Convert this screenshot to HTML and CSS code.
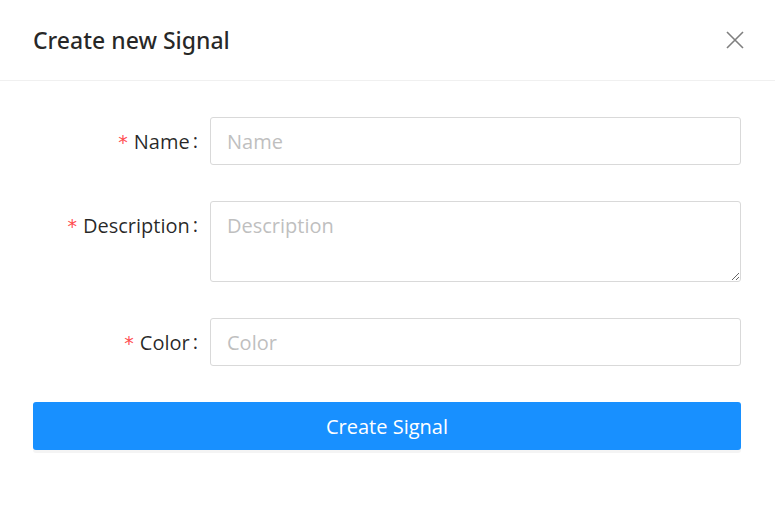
FILE: index.html
```html
<!DOCTYPE html>
<html>
<head>
<meta charset="utf-8">
<link rel="stylesheet" href="styles.css">
</head>
<body>
<div class="modal">
  <div class="modal-header">
    <div class="modal-title">Create new Signal</div>
    <button class="modal-close" aria-label="Close">
      <svg width="18" height="18" viewBox="0 0 18 18"><path d="M1 1 L17 17 M17 1 L1 17" stroke="#7f7f7f" stroke-width="1.6" fill="none"/></svg>
    </button>
  </div>
  <form class="modal-body">
    <div class="form-row">
      <label class="form-label"><span class="req">*</span>Name<span class="colon">:</span></label>
      <div class="form-control"><input class="input" placeholder="Name"></div>
    </div>
    <div class="form-row">
      <label class="form-label"><span class="req">*</span>Description<span class="colon">:</span></label>
      <div class="form-control"><textarea class="input textarea" placeholder="Description"></textarea></div>
    </div>
    <div class="form-row">
      <label class="form-label"><span class="req">*</span>Color<span class="colon">:</span></label>
      <div class="form-control"><input class="input" placeholder="Color"></div>
    </div>
    <button type="button" class="btn-primary">Create Signal</button>
  </form>
</div>
</body>
</html>
```

FILE: styles.css
```css
html, body {
  margin: 0;
  padding: 0;
  background: #fff;
}
body {
  font-family: "Open Sans", "Noto Sans", sans-serif;
  color: rgba(0, 0, 0, 0.85);
  width: 775px;
  height: 520px;
  overflow: hidden;
}
.modal {
  display: flex;
  flex-direction: column;
}
.modal-header {
  height: 81px;
  box-sizing: border-box;
  border-bottom: 1px solid #f0f0f0;
  display: flex;
  align-items: center;
  justify-content: space-between;
  padding: 0 31px 0 33px;
}
.modal-title {
  font-family: "Noto Sans", "Open Sans", sans-serif;
  font-size: 23px;
  font-weight: 500;
  color: rgba(0, 0, 0, 0.85);
  line-height: 1;
}
.modal-close {
  border: 0;
  background: transparent;
  padding: 0;
  width: 18px;
  height: 18px;
  display: flex;
  cursor: pointer;
}
.modal-body {
  padding: 36px 34px 0 33px;
  display: flex;
  flex-direction: column;
  gap: 36px;
  margin: 0;
}
.form-row {
  display: flex;
  align-items: flex-start;
}
.form-label {
  width: 177px;
  flex: none;
  height: 48px;
  display: flex;
  align-items: center;
  justify-content: flex-end;
  font-size: 20px;
  color: rgba(0, 0, 0, 0.85);
}
.req {
  color: #ff4d4f;
  font-family: "DejaVu Sans", sans-serif;
  font-size: 19px;
  margin-right: 6px;
  position: relative;
  top: 1px;
}
.colon {
  margin: 0 12px 0 3px;
  position: relative;
  top: -1px;
}
.form-control {
  flex: 1;
  display: flex;
}
.input {
  flex: 1;
  box-sizing: border-box;
  height: 48px;
  border: 1px solid #d9d9d9;
  border-radius: 3px;
  padding: 0 16px;
  font-family: "Open Sans", "Noto Sans", sans-serif;
  font-size: 20px;
  color: rgba(0, 0, 0, 0.85);
  background: #fff;
  outline: none;
  margin: 0;
}
.input::placeholder {
  color: #bfbfbf;
}
.textarea {
  height: 81px;
  padding: 11px 16px 9px;
  line-height: 1.3;
  resize: vertical;
  display: block;
}
.btn-primary {
  height: 48px;
  border: 0;
  border-radius: 3px;
  background: #1890ff;
  color: #fff;
  font-family: "Open Sans", "Noto Sans", sans-serif;
  font-size: 20px;
  box-shadow: 0 3px 0 rgba(0, 0, 0, 0.045);
  cursor: pointer;
  margin: 0;
}
```
